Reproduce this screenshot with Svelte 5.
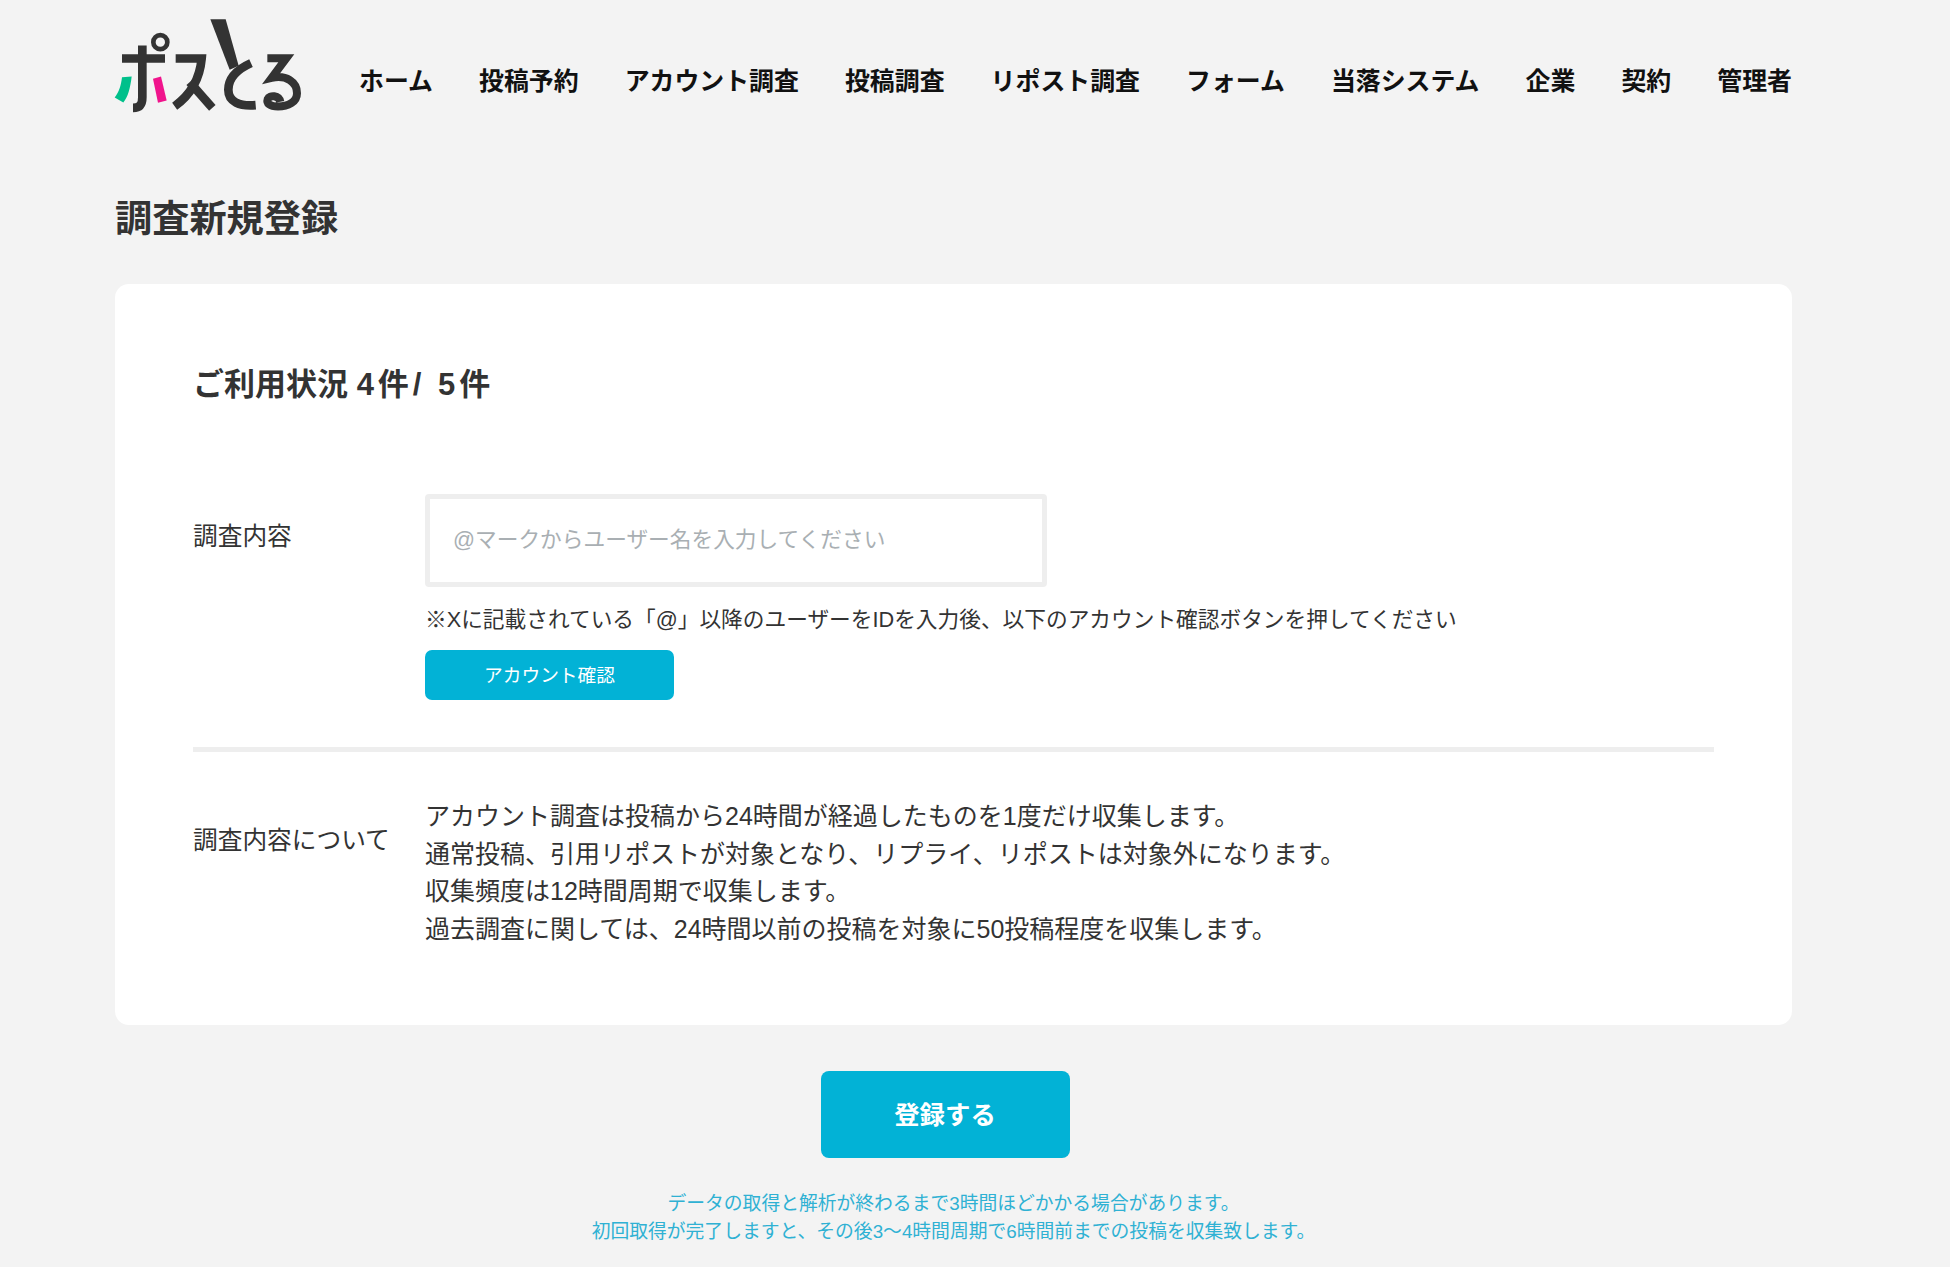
<script>
  const nav = ['ホーム','投稿予約','アカウント調査','投稿調査','リポスト調査','フォーム','当落システム','企業','契約','管理者'];
  const about = [
    'アカウント調査は投稿から24時間が経過したものを1度だけ収集します。',
    '通常投稿、引用リポストが対象となり、リプライ、リポストは対象外になります。',
    '収集頻度は12時間周期で収集します。',
    '過去調査に関しては、24時間以前の投稿を対象に50投稿程度を収集します。'
  ];
</script>

<div class="page">
  <header class="header">
    <svg class="logo" viewBox="70 50 570 290" role="img" aria-label="ポスとる">
      <g fill="none" stroke="#333" stroke-width="26">
        <path d="M97 174H226"/>
        <path d="M158 135V290C158 312 150 322 130 322"/>
        <circle cx="212" cy="125" r="21" stroke-width="14"/>
        <path d="M258 174H336C330 240 300 285 255 317"/>
        <path d="M300 245L368 322"/>
        <path d="M484 188C435 210 416 240 416 268C416 305 450 318 498 314" stroke-width="26"/>
        <path d="M533 173H590L546 232C590 222 622 245 622 278C622 305 595 318 565 318C540 318 530 308 534 296C540 282 568 284 572 304" stroke-width="24"/>
      </g>
      <path fill="#333" d="M362 56H408L447 196L420 208Z"/>
      <path fill="#00c08b" d="M97 230L126 228C122 262 115 290 101 306L75 291C88 275 94 255 97 230Z"/>
      <path fill="#f0148c" d="M190 235L214 228L231 300L205 307Z"/>
    </svg>
    <nav class="nav">
      {#each nav as item}
        <span class="nav-item">{item}</span>
      {/each}
    </nav>
  </header>

  <h1 class="title">調査新規登録</h1>

  <section class="card">
    <h2 class="usage">ご利用状況 <span class="count">4件/ 5件</span></h2>

    <div class="row first">
      <div class="label">調査内容</div>
      <div class="field">
        <input class="input" type="text" placeholder="@マークからユーザー名を入力してください" />
        <p class="note">※Xに記載されている「@」以降のユーザーをIDを入力後、以下のアカウント確認ボタンを押してください</p>
        <button class="check" type="button">アカウント確認</button>
      </div>
    </div>

    <div class="row second">
      <div class="label">調査内容について</div>
      <div class="about">
        {#each about as line}
          <p>{line}</p>
        {/each}
      </div>
    </div>
  </section>

  <div class="submit-wrap">
    <button class="submit" type="button">登録する</button>
  </div>

  <div class="foot">
    <p>データの取得と解析が終わるまで3時間ほどかかる場合があります。</p>
    <p>初回取得が完了しますと、その後3〜4時間周期で6時間前までの投稿を収集致します。</p>
  </div>
</div>

<style>
  :global(body) {
    margin: 0;
    background: #f3f3f3;
  }
  .page {
    width: 1677px;
    margin-left: 115px;
    font-family: "Liberation Sans", "Noto Sans CJK JP", sans-serif;
    color: #333;
  }
  .header {
    display: flex;
    align-items: flex-start;
    height: 160px;
  }
  .logo {
    width: 190px;
    height: 97px;
    margin: 17px 0 0 -2px;
    flex: none;
  }
  .nav {
    display: flex;
    flex: 1;
    justify-content: space-between;
    margin-left: 56px;
    padding-top: 63px;
  }
  .nav-item {
    font-size: 24.9px;
    line-height: 36px;
    font-weight: 700;
    color: #111;
  }
  .title {
    margin: 0;
    font-size: 37.2px;
    line-height: 56px;
    font-weight: 700;
    height: 124px;
    padding-top: 31px;
    box-sizing: border-box;
  }
  .card {
    background: #fff;
    border-radius: 14px;
    height: 741px;
    box-sizing: border-box;
    padding: 79px 78px 0 78px;
  }
  .usage {
    margin: 0;
    font-size: 31px;
    line-height: 44px;
    font-weight: 700;
  }
  .count {
    letter-spacing: 4px;
  }
  .row {
    display: grid;
    grid-template-columns: 232px 1fr;
    align-items: start;
  }
  .row.first {
    margin-top: 87px;
    padding-bottom: 47px;
    border-bottom: 5px solid #eee;
  }
  .row.second {
    margin-top: 46px;
  }
  .label {
    font-size: 24.7px;
    line-height: 36px;
    padding-top: 25px;
  }
  .input {
    display: block;
    width: 622px;
    height: 93px;
    box-sizing: border-box;
    border: 5px solid #eee;
    border-radius: 4px;
    padding: 0 23px 2px;
    background: #fff;
    font: inherit;
    font-size: 21.7px;
    outline: none;
  }
  .input::placeholder {
    color: #a9afb3;
    opacity: 1;
  }
  .note {
    margin: 16px 0 0;
    font-size: 21.7px;
    line-height: 33px;
  }
  .check {
    display: block;
    width: 249px;
    height: 50px;
    margin-top: 14px;
    padding: 0 0 3px;
    border: 0;
    border-radius: 7px;
    background: #02b2d6;
    color: #fff;
    font: inherit;
    font-size: 18.7px;
  }
  .about p {
    margin: 0;
    font-size: 25px;
    line-height: 37.5px;
  }
  .submit-wrap {
    display: flex;
    justify-content: center;
    margin-top: 46px;
    padding-right: 17px;
  }
  .submit {
    width: 249px;
    height: 87px;
    padding: 0 0 3px;
    border: 0;
    border-radius: 8px;
    background: #02b2d6;
    color: #fff;
    font: inherit;
    font-size: 25.4px;
    font-weight: 700;
  }
  .foot {
    margin-top: 32px;
    text-align: center;
    color: #2fb1d3;
    font-size: 18.8px;
    line-height: 28px;
  }
  .foot p {
    margin: 0;
  }
</style>
